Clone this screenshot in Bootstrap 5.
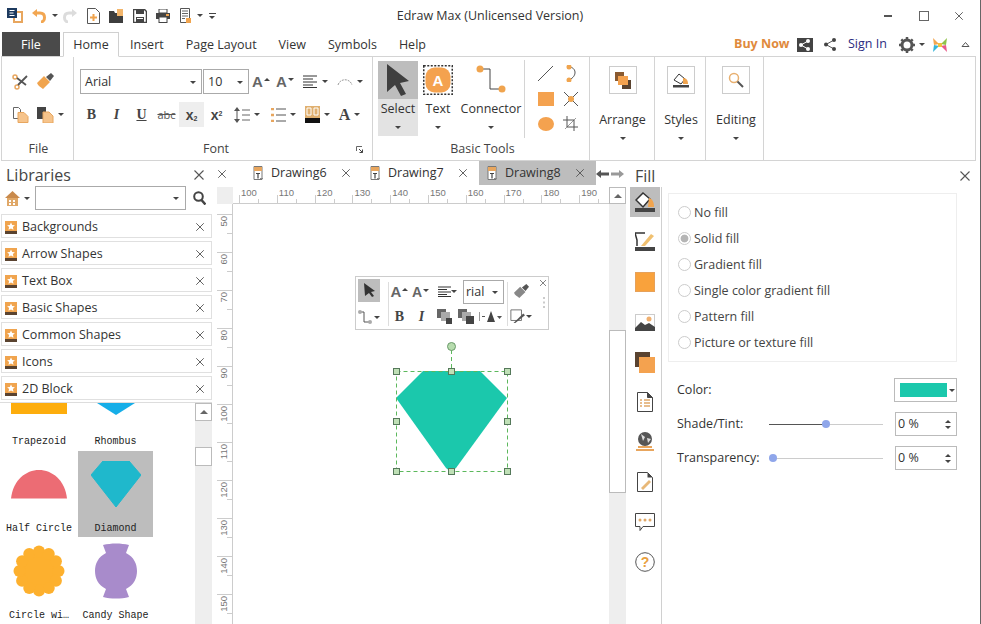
<!DOCTYPE html>
<html lang="en">
<head>
<meta charset="utf-8">
<title>Edraw Max</title>
<link href="https://cdn.jsdelivr.net/npm/bootstrap@5.3.0/dist/css/bootstrap.min.css" rel="stylesheet">
<style>
html,body{margin:0;height:100%;overflow:hidden;background:#fff}
body{font-family:"Open Sans","Noto Sans",sans-serif;font-size:12.5px;color:#333;line-height:1}
svg{display:block;flex:none}
.app{width:981px;height:624px;display:flex;flex-direction:column;overflow:hidden;border-right:1px solid #666}
.tri{display:inline-block;width:0;height:0;border-left:3px solid transparent;border-right:3px solid transparent;border-top:3px solid #444;flex:none}
.tri-up{display:inline-block;width:0;height:0;border-left:3px solid transparent;border-right:3px solid transparent;border-bottom:3px solid #444;flex:none}
.tbar{height:31px;display:grid;grid-template-columns:3px 23px 24px 10px 21px 24px 23px 23px 23px 23px 6px 18px 1fr 34px 38px 32px;padding-right:5px;align-items:center;justify-items:center;position:relative}
.ttl{position:absolute;left:0;right:0;top:10px;text-align:center;font-size:12.5px;color:#333}
.tabrow{height:25px;display:flex;align-items:flex-end;padding-left:2px}
.tabrow .nav-tabs{border:0;gap:0;flex-wrap:nowrap}
.tabrow .nav-link{border:0;border-radius:0;padding:2px 0 0;height:24px;display:flex;align-items:center;color:#333;font-size:12.5px;background:none}
.t-file{width:58px;background:#4a4a4a!important;color:#fff!important;justify-content:center}
.t-home{width:56px;margin-left:3px;justify-content:center;border:1px solid #d0d0d0!important;border-bottom:1px solid #fff!important;height:25px!important;margin-bottom:-1px;position:relative;z-index:2;background:#fff!important}
.t-i{margin-left:11px;margin-right:22px}
.t-p{margin-right:22px}.t-v{margin-right:22px}.t-s{margin-right:22px}
.tabright{margin-left:auto;display:flex;align-items:center;height:24px;padding-right:10px;padding-top:1px}
.buy{color:#e08a3c;font-weight:700;font-size:12.5px;width:63px}
.sign{color:#2b2b80;width:51px;margin-left:12px}
.shr{margin-left:11px}
.gl{margin-left:7px}
.chv{margin-left:13px}
.rib{margin-left:1px;width:975px;height:105px;border:1px solid #d4d4d4;display:flex;flex:none}
.grp{display:flex;flex-direction:column;border-right:1px solid #d4d4d4;height:103px;flex:none}
.g-body{height:82px;flex:none}
.g-lbl{height:21px;display:flex;align-items:center;justify-content:center;color:#444;position:relative;font-size:12.5px}
.lb-file{padding-left:2px}
.lb-font{padding-right:14px}
.lb-basic{padding-left:3px}
.launch{right:9px;top:7px}
.r2{display:flex;height:33px;align-items:center}
.pl6{padding-left:6px}.pl5{padding-left:5px}
.sl{display:flex;align-items:center;justify-content:center;height:25px;gap:4px;flex:none}
.w25{width:25px}.w24{width:24px}.w36{width:36px}.w33{width:33px}.w31{width:31px}.w34{width:34px}.w37{width:37px}
.on-lite{background:#eee}
.fnt{height:25px;border:1px solid #aaa;display:flex;align-items:center;justify-content:space-between;padding:1px 5px 0 4px;background:#fff;color:#333}
.fnt-a{width:122px}.fnt-b{width:46px;margin-left:1px}
.ab{font-family:"Liberation Sans",sans-serif;font-weight:700;font-size:15px;color:#666;display:flex;align-items:flex-start;gap:1px}
.ab-s{font-size:14px}
.ser{font-family:"Liberation Serif",serif;font-weight:700;font-size:14px;color:#444}
.ser-a{font-size:16px}
.sns{font-family:"Liberation Sans",sans-serif}
.sns sub,.sns sup{font-size:7px}
.abc{font-size:11px;color:#555}
.big{display:flex;flex-direction:column;align-items:center;height:75px;margin-top:4px;flex:none;font-size:12.5px}
.wb40{width:40px}.wb66{width:66px}
.big-top{height:38px;width:100%;display:flex;align-items:center;justify-content:center}
.big-l{height:19px;display:flex;align-items:center;padding-top:2px}
.big-c{height:18px;display:flex;align-items:center}
.sel-b{background:#e3e3e3}.sel-b .big-top{background:#bdbdbd}
.tools{display:grid;grid-template-columns:25px 25px;grid-auto-rows:25px;margin-top:4px;margin-left:8px;align-items:center;justify-items:center}
.sub-div{border-right:1px solid #d4d4d4;height:78px;margin-top:3px}
.mono{display:flex;flex-direction:column;align-items:center;height:103px}
.m-a{padding-left:1px}.m-b{padding-left:2px}.m-c{padding-left:3px}
.ibox{width:28px;height:28px;border:1px solid #ccc;margin-top:9px;display:flex;align-items:center;justify-content:center}
.mono-l{margin-top:17px;height:16px;display:flex;align-items:center;padding-top:2px}
.mono-c{margin-top:10px;display:flex}
.main{display:flex;flex:1;min-height:0}
.left{width:217px;flex:none;display:flex;flex-direction:column}
.lhead{height:25px;display:flex;align-items:center;justify-content:space-between;padding:3px 7px 0 6px;font-size:16px;color:#444;width:212px}
.lsearch{height:24px;display:flex;align-items:center;padding-left:5px;width:212px}
.lfield{width:151px;height:24px;border:1px solid #aaa;margin-left:5px;display:flex;align-items:center;justify-content:flex-end;padding-right:6px;flex:none}
.srch{margin-left:7px}
.llist{margin:4px 0 0 1px;width:211px;display:flex;flex-direction:column;gap:3px;flex:none;border-radius:0}
.llist .list-group-item{height:24px;padding:2px 6px 0 3px;border:1px solid #e0e0e0;border-radius:0;display:flex;align-items:center;gap:5px;margin:0;color:#333;font-size:12.5px}
.llist .list-group-item svg:last-child{margin-left:auto}
.sarea{margin-top:2px;border-top:1px solid #ddd;flex:1;display:flex;min-height:0;width:212px;overflow:hidden}
.sgrid{width:195px;display:grid;grid-template-columns:78px 75px;grid-template-rows:48px 86px 87px;flex:none;font-family:"Liberation Mono",monospace;font-size:10px;color:#222}
.tile{display:flex;flex-direction:column;align-items:center;justify-content:flex-end;overflow:hidden}
.tile-on{background:#bdbdbd}
.tshape{flex:1;width:100%;display:flex;align-items:center;justify-content:center;min-height:0}
.tile1 .tshape{align-items:flex-start}
.tlbl{height:20px;display:flex;align-items:center;white-space:nowrap;flex:none;padding-top:3px}
.tile1 .tlbl{padding-top:1px}
.vsb{width:17px;background:#eee;display:flex;flex-direction:column;flex:none}
.sbtn{height:18px;background:#fff;border:1px solid #bbb;display:flex;align-items:center;justify-content:center;flex:none}
.sbtn .tri-up{border-left-width:4px;border-right-width:4px;border-bottom:4px solid #666}
.sbtn-w{width:17px;height:17px}
.sthumb{background:#fff;border:1px solid #bbb;flex:none}
.th-a{margin-top:26px;height:19px}
.th-b{height:163px;margin-top:126px}
.center{width:410px;flex:none;display:flex;flex-direction:column}
.dtabs{height:26px;display:flex;align-items:center;flex:none}
.dt-x{margin-right:18px}
.dt{display:flex;align-items:center;height:24px;width:117px;padding-left:7px;gap:7px;color:#333;font-size:12.5px;margin-top:-2px;flex:none}
.dt-on{background:#bdbdbd}
.dt svg:last-child{margin-left:7px}
.rulerow{display:flex;height:17px;flex:none}
.corner{width:16px;background:#eee;flex:none}
.hr-u{width:376px;display:flex;overflow:hidden;padding-left:6px;border-bottom:1px solid #ccc;flex:none;font-size:9.5px;color:#777;font-family:"Liberation Sans",sans-serif}
.hr-n{width:37.8px;flex:none;border-left:1px solid #ccc;margin-top:8px;height:8px;position:relative}
.hr-n span{position:absolute;left:1px;top:-7px;white-space:nowrap}
.hr-n::after{content:"";position:absolute;left:18px;bottom:0;height:4px;border-left:1px solid #ccc}
.work{display:flex;flex:1;min-height:0}
.vrule{width:16px;flex:none;overflow:hidden;padding-top:10px;border-right:1px solid #ccc;font-size:9.5px;color:#777;font-family:"Liberation Sans",sans-serif}
.vr-n{height:38px;width:100%;border-top:1px solid #ccc;position:relative}
.vr-n span{position:absolute;left:2px;top:1px;writing-mode:vertical-rl;transform:rotate(180deg);white-space:nowrap}
.vr-n::after{content:"";position:absolute;right:0;top:18px;width:5px;border-top:1px solid #ccc}
.canvas{width:376px;flex:none;position:relative;overflow:hidden;background:#fff}
.vsb2{width:17px;flex:none;background:#eee;display:flex;flex-direction:column}
.flt{position:absolute;left:122px;top:72px;width:194px;height:54px;border:1px solid #ccc;background:#fff;display:flex;padding:2px 0 0 1px}
.f-col{display:flex;flex-direction:column;flex:none}
.f-a{width:24px;align-items:center}
.f-main{width:118px}
.f-r{width:26px;align-items:center}
.f-row{display:flex;height:25px;align-items:center;flex:none}
.f-row>*{flex:none}
.f-sep{width:1px;background:#ddd;height:44px;margin:3px 0 0 7px;flex:none}
.f-sep2{margin:3px 0 0 0}
.f-21{width:21px;display:flex;justify-content:center}
.f-23{width:23px;display:flex;justify-content:center}
.f-22{width:22px;display:flex;justify-content:center}
.f-27{width:27px;display:flex;justify-content:center}
.f-32{width:32px;display:flex;justify-content:center;align-items:center}
.f-cell{height:25px;display:flex;align-items:center;justify-content:center;gap:1px}
.fsel{background:#bdbdbd;width:22px;height:24px;display:flex;align-items:center;justify-content:center}
.frial{width:41px;height:24px;border:1px solid #aaa;display:flex;align-items:center;justify-content:space-between;padding:1px 5px 0 2px}
.f-x{position:absolute;right:1px;top:2px}
.f-dots{position:absolute;right:3px;top:20px}
.selsvg{position:absolute;left:157px;top:136px}
.right{flex:1;display:flex;flex-direction:column;min-width:0}
.rhead{height:26px;display:flex;align-items:center;justify-content:space-between;padding:3px 9px 0 8px;font-size:16px;color:#444;flex:none}
.rbody{display:flex;flex:1;min-height:0}
.side{width:35px;border-right:1px solid #d0d0d0;flex:none;display:flex;flex-direction:column;align-items:flex-end;padding-right:1px}
.sitem{width:30px;height:30px;margin-bottom:10px;display:flex;align-items:center;justify-content:center;flex:none}
.sitem.on{background:#bdbdbd}
.form-p{flex:1;padding-top:6px;padding-left:6px}
.gbox{width:289px;height:169px;border:1px solid #eee;padding:5px 0 0 9px}
.gbox .form-check{height:26px;min-height:0;margin:0;padding:0;display:flex;align-items:center;gap:3px;color:#444}
.gbox .form-check-input{float:none;margin:0;width:13px;height:13px;border:1px solid #ccc;flex:none;opacity:1}
.gbox .form-check-input:checked{background-color:#fff;border-color:#ccc;background-image:radial-gradient(circle,#b5b5b5 0,#b5b5b5 45%,#fff 55%)}
.gbox .form-check-label{opacity:1!important;color:#444;padding-top:2px}
.prow{display:flex;align-items:center;height:24px;margin-left:9px;width:280px;margin-bottom:10px;color:#333}
.plbl{width:92px;flex:none}
.track{width:114px;height:1px;background:#ccc;position:relative;flex:none;margin-right:12px}
.fillbar{position:absolute;left:0;top:0;height:1px;background:#555}
.thumb{position:absolute;width:8px;height:8px;border-radius:50%;background:#8fa6ea;top:-4px}
.pbox{width:62px;height:24px;border:1px solid #bbb;display:flex;align-items:center;justify-content:space-between;padding:0 5px 0 2px;flex:none}
.spin{display:flex;flex-direction:column;gap:3px}
.cbox{width:63px;height:24px;border:1px solid #bbb;margin-left:auto;display:flex;align-items:center;padding-left:5px;gap:2px}
.cswatch{width:47px;height:14px;background:#1bc8ac}
.menu-m{gap:2px}
</style>
</head>
<body>
<svg width="0" height="0" class="position-absolute">
<defs>
<symbol id="xx" viewBox="0 0 12 12"><path d="M1.500 1.500l9 9M10.500 1.500l-9 9" stroke="#555" stroke-width="1.100" fill="none"/></symbol>
<symbol id="star" viewBox="0 0 12 13"><rect width="12" height="10" fill="#f0a44e"/><rect y="10" width="12" height="3" fill="#5a4330"/><path d="M6 1.500l1.200 2.500 2.700.3-2 1.800.6 2.700L6 7.400 3.500 8.800l.6-2.700-2-1.800 2.700-.3z" fill="#fff"/></symbol>
<symbol id="dc" viewBox="0 0 12 15"><path d="M2 .5h8v13H2z" fill="#fff" stroke="#777"/><rect x="2" y="1" width="8" height="4" fill="#e8a65e"/><path d="M4 7.500h4M6 7.500v5" stroke="#444" stroke-width="1.200"/><path d="M8 12.500h3" stroke="#888"/></symbol>
</defs>
</svg>
<div class="app">
  <div class="tbar">
    <span></span>
    <svg width="16" height="15" viewBox="0 0 16 15"><rect x="7" y="4" width="8" height="10" fill="none" stroke="#e8a65e" stroke-width="2"/><rect width="10" height="10" fill="#1d3a5f"/><path d="M2.500 2.500h5M2.500 5h4M2.500 7.500h5" stroke="#fff" stroke-width="1.200"/></svg>
    <svg width="15" height="14" viewBox="0 0 15 14"><path d="M5 4h4c3 0 4.500 2 4.500 4.500S12 13 10 13" stroke="#f2a651" stroke-width="3" fill="none"/><path d="M6 0v8L1 4z" fill="#f2a651"/></svg>
    <span class="tri"></span>
    <svg width="15" height="14" viewBox="0 0 15 14"><path d="M10 4H6C3 4 1.500 6 1.500 8.500S3 13 5 13" stroke="#dcdcdc" stroke-width="3" fill="none"/><path d="M9 0v8l5-4z" fill="#dcdcdc"/></svg>
    <svg width="13" height="16" viewBox="0 0 13 16"><path d="M.5.5h8l4 4v11H.5z" fill="#fff" stroke="#555"/><path d="M6.500 6v7M3 9.500h7" stroke="#f0a44e" stroke-width="2"/></svg>
    <svg width="15" height="14" viewBox="0 0 15 14"><path d="M0 2h5l1 2h8v10H0z" fill="#3d3d3d"/><rect x="8" y="0" width="6" height="7" fill="#f2b56b"/></svg>
    <svg width="14" height="14" viewBox="0 0 14 14"><path d="M.5.5h11l2 2v11H.5z" fill="#fff" stroke="#444" stroke-width="1.500"/><rect x="3" y="1" width="8" height="4" fill="#444"/><rect x="3" y="8" width="8" height="5" fill="#444"/><rect x="4" y="9" width="6" height="1" fill="#fff"/></svg>
    <svg width="14" height="14" viewBox="0 0 14 14"><rect x="3" width="8" height="4" fill="#fff" stroke="#444"/><rect y="4" width="14" height="6" fill="#444"/><rect x="3" y="8" width="8" height="5.500" fill="#fff" stroke="#444"/><rect x="10" y="5" width="3" height="2" fill="#f0a44e"/></svg>
    <svg width="12" height="16" viewBox="0 0 12 16"><path d="M.5.5h9v14H.5z" fill="#fff" stroke="#555"/><path d="M2 3h6M2 5.500h6M2 8h6M2 10.500h3" stroke="#666"/><rect x="6" y="10" width="5" height="5" fill="#f0a44e"/></svg>
    <span class="tri"></span>
    <span class="d-flex flex-column align-items-center menu-m"><svg width="7" height="1"><rect width="7" height="1" fill="#444"/></svg><span class="tri"></span></span>
    <span></span>
    <svg width="8" height="2"><rect width="8" height="2" fill="#555"/></svg>
    <svg width="10" height="10" viewBox="0 0 10 10"><rect x=".5" y=".5" width="9" height="9" fill="none" stroke="#666"/></svg>
    <svg width="10" height="10"><use href="#xx"/></svg>
    <div class="ttl">Edraw Max (Unlicensed Version)</div>
  </div>
  <div class="tabrow">
    <ul class="nav nav-tabs">
      <li class="nav-item"><a class="nav-link t-file" href="#">File</a></li>
      <li class="nav-item"><a class="nav-link t-home" href="#">Home</a></li>
      <li class="nav-item"><a class="nav-link t-i" href="#">Insert</a></li>
      <li class="nav-item"><a class="nav-link t-p" href="#">Page Layout</a></li>
      <li class="nav-item"><a class="nav-link t-v" href="#">View</a></li>
      <li class="nav-item"><a class="nav-link t-s" href="#">Symbols</a></li>
      <li class="nav-item"><a class="nav-link" href="#">Help</a></li>
    </ul>
    <div class="tabright">
      <span class="buy">Buy Now</span>
      <svg width="16" height="14" viewBox="0 0 16 14"><rect width="16" height="14" fill="#444"/><path d="M4 7l7-4M4 7l7 4" stroke="#fff"/><circle cx="4" cy="7" r="2" fill="#fff"/><circle cx="11" cy="3" r="2" fill="#fff"/><circle cx="11" cy="11" r="2" fill="#fff"/></svg>
      <svg class="shr" width="12" height="13" viewBox="0 0 12 13"><path d="M10 2L2 6.500l8 4.500" stroke="#555" fill="none"/><circle cx="10" cy="2" r="2" fill="#444"/><circle cx="2" cy="6.500" r="2" fill="#444"/><circle cx="10" cy="11" r="2" fill="#444"/></svg>
      <span class="sign">Sign In</span>
      <svg width="16" height="16" viewBox="0 0 16 16"><circle cx="8" cy="8" r="5" fill="none" stroke="#555" stroke-width="3"/><path d="M8 0v3M8 13v3M0 8h3M13 8h3M2.300 2.300l2 2M11.700 11.700l2 2M13.700 2.300l-2 2M4.300 11.700l-2 2" stroke="#555" stroke-width="2.500"/></svg>
      <span class="tri ms-1"></span>
      <svg class="gl" width="16" height="16" viewBox="0 0 16 16"><path d="M1 1l6 6-5 1z" fill="#f2a651"/><path d="M15 1L9 7l5 1z" fill="#8fc34a"/><path d="M1 15l6-6-5-1z" fill="#36b5d8"/><path d="M15 15L9 9l5-1z" fill="#e85a8a"/><rect x="6" y="6" width="4" height="4" fill="#f0c040"/></svg>
      <svg class="chv" width="9" height="7" viewBox="0 0 9 7"><path d="M1 5.500l3.500-4 3.500 4z" fill="none" stroke="#555"/></svg>
    </div>
  </div>
  <div class="rib">
    <div class="grp" style="width:72px">
      <div class="g-body pt-2">
        <div class="r2 pl6">
          <div class="sl w25"><svg width="17" height="16" viewBox="0 0 17 16"><circle cx="3" cy="3" r="2" fill="none" stroke="#e8a65e" stroke-width="1.500"/><circle cx="5" cy="13" r="2" fill="none" stroke="#e8a65e" stroke-width="1.500"/><path d="M5 4l9 7M6 11l9-9" stroke="#555" stroke-width="1.800"/></svg></div>
          <div class="sl w25"><svg width="17" height="17" viewBox="0 0 17 17"><path d="M0 10l7-7 6 6-7 7c-2-2-5-3-6-6z" fill="#f0a44e"/><path d="M9 4l5-4 3 3-4 5z" fill="#555"/></svg></div>
        </div>
        <div class="r2 pl6">
          <div class="sl w25"><svg width="16" height="16" viewBox="0 0 16 16"><path d="M.5.5h5l2 2v9h-7z" fill="#fff" stroke="#666"/><path d="M5 5.500h6l4 4v6H5z" fill="#f6c48c" stroke="#e8a65e"/></svg></div>
          <div class="sl w34"><svg width="17" height="16" viewBox="0 0 17 16"><rect width="9" height="12" fill="#444"/><path d="M6 5h6l4 4v7H6z" fill="#f6c48c" stroke="#e8a65e"/></svg><span class="tri"></span></div>
        </div>
      </div>
      <div class="g-lbl lb-file">File</div>
    </div>
    <div class="grp" style="width:299px">
      <div class="g-body pt-2">
        <div class="r2 pl6">
          <div class="fnt fnt-a"><span>Arial</span><span class="tri"></span></div>
          <div class="fnt fnt-b"><span>10</span><span class="tri"></span></div>
          <div class="sl w24"><span class="ab">A<span class="tri-up mt-1"></span></span></div>
          <div class="sl w24"><span class="ab">A<span class="tri mt-1"></span></span></div>
          <div class="sl w37"><svg width="15" height="13" viewBox="0 0 15 13"><path d="M0 1h14M0 4h10M0 7h14M0 10h10M0 12.500h14" stroke="#333"/></svg><span class="tri"></span></div>
          <div class="sl w31"><svg width="16" height="9" viewBox="0 0 16 9"><path d="M1 8C3 1 13 1 15 8" fill="none" stroke="#999" stroke-dasharray="2 1"/></svg><span class="tri"></span></div>
        </div>
        <div class="r2 pl5">
          <div class="sl w25"><span class="ser">B</span></div>
          <div class="sl w25"><span class="ser fst-italic">I</span></div>
          <div class="sl w25"><span class="ser text-decoration-underline">U</span></div>
          <div class="sl w25"><span class="abc text-decoration-line-through">abc</span></div>
          <div class="sl w25 on-lite"><span class="ser sns">x<sub>2</sub></span></div>
          <div class="sl w25"><span class="ser sns">x<sup>2</sup></span></div>
          <div class="sl w36"><svg width="16" height="16" viewBox="0 0 16 16"><path d="M3 0l3 4H0zM3 16l3-4H0z" fill="#555"/><path d="M3 4v8" stroke="#555"/><path d="M8 3h8M8 8h8M8 13h8" stroke="#666"/></svg><span class="tri"></span></div>
          <div class="sl w36"><svg width="15" height="14" viewBox="0 0 15 14"><path d="M0 1h3M0 7h3M0 13h3" stroke="#e8a65e" stroke-width="2.500"/><path d="M5 1h10M5 7h10M5 13h10" stroke="#555"/></svg><span class="tri"></span></div>
          <div class="sl w33"><svg width="15" height="17" viewBox="0 0 15 17"><rect width="15" height="12" fill="#e0b070"/><path d="M2 2h4v7H2zM9 2h4v7H9z" fill="none" stroke="#fff"/><rect y="12" width="15" height="5" fill="#111"/></svg><span class="tri"></span></div>
          <div class="sl w31"><span class="ser ser-a">A</span><span class="tri"></span></div>
        </div>
      </div>
      <div class="g-lbl lb-font">Font<svg class="position-absolute launch" width="7" height="7" viewBox="0 0 7 7"><path d="M.5 5V.5H6" fill="none" stroke="#666"/><path d="M3 3l3.500 3.500M6.500 3.500v3h-3" fill="none" stroke="#444"/></svg></div>
    </div>
    <div class="grp" style="width:217px">
      <div class="g-body d-flex pl5">
        <div class="big sel-b wb40">
          <div class="big-top"><svg width="24" height="32" viewBox="0 0 24 32"><path d="M1 0l22 17-9 2 6 11-5 2-6-11-8 7z" fill="#3f3f3f"/></svg></div>
          <div class="big-l">Select</div><div class="big-c"><span class="tri"></span></div>
        </div>
        <div class="big wb40">
          <div class="big-top"><svg width="30" height="30" viewBox="0 0 30 30"><rect x=".75" y=".75" width="28.500" height="28.500" fill="none" stroke="#333" stroke-width="1.500" stroke-dasharray="2 1.500"/><rect x="2.500" y="2.500" width="25" height="25" rx="9" fill="#f4a24f"/><text x="15" y="21" text-anchor="middle" font-family="Liberation Sans" font-weight="700" font-size="15" fill="#fff">A</text></svg></div>
          <div class="big-l">Text</div><div class="big-c"><span class="tri"></span></div>
        </div>
        <div class="big wb66">
          <div class="big-top"><svg width="32" height="30" viewBox="0 0 32 30"><path d="M5 4h10v20h12" fill="none" stroke="#444"/><circle cx="5" cy="4" r="3.500" fill="#f0a44e"/><circle cx="27" cy="24" r="3.500" fill="#f0a44e"/></svg></div>
          <div class="big-l">Connector</div><div class="big-c"><span class="tri"></span></div>
        </div>
        <div class="sub-div"></div>
        <div class="tools">
          <svg width="17" height="17" viewBox="0 0 17 17"><path d="M1 16L16 1" stroke="#555"/></svg>
          <svg width="12" height="17" viewBox="0 0 12 17"><path d="M4 2c7 0 9 9 0 13" fill="none" stroke="#555"/><circle cx="4" cy="2" r="2.500" fill="#f0a44e"/><circle cx="4" cy="15" r="2.500" fill="#f0a44e"/></svg>
          <svg width="16" height="14" viewBox="0 0 16 14"><rect width="16" height="14" fill="#f4a24f"/></svg>
          <svg width="16" height="16" viewBox="0 0 16 16"><path d="M1 1l14 14M15 1L1 15" stroke="#555"/><circle cx="8" cy="8" r="3" fill="#f0a44e"/></svg>
          <svg width="16" height="14" viewBox="0 0 16 14"><ellipse cx="8" cy="7" rx="8" ry="7" fill="#f4a24f"/></svg>
          <svg width="15" height="15" viewBox="0 0 15 15"><path d="M0 4h11v11M4 0v11h11" fill="none" stroke="#555"/><path d="M2 13L13 2" stroke="#555" stroke-width=".6"/></svg>
        </div>
      </div>
      <div class="g-lbl lb-basic">Basic Tools</div>
    </div>
    <div class="grp" style="width:65px">
      <div class="mono m-a">
        <div class="ibox"><svg width="16" height="17" viewBox="0 0 16 17"><rect width="9" height="9" fill="#8a5a30"/><rect x="7" y="8" width="9" height="9" fill="#5a4330"/><rect x="3" y="4" width="10" height="9" fill="#f4a24f"/></svg></div>
        <div class="mono-l">Arrange</div><div class="mono-c"><span class="tri"></span></div>
      </div>
    </div>
    <div class="grp" style="width:51px">
      <div class="mono m-b">
        <div class="ibox"><svg width="16" height="15" viewBox="0 0 16 15"><path d="M1 7l5-6 6 5-4 5z" fill="#fff" stroke="#333"/><path d="M10 5c4 0 5 3 5 6h-5z" fill="#f0a44e"/><rect y="12" width="16" height="2.500" fill="#444"/></svg></div>
        <div class="mono-l">Styles</div><div class="mono-c"><span class="tri"></span></div>
      </div>
    </div>
    <div class="grp" style="width:58px">
      <div class="mono m-c">
        <div class="ibox"><svg width="16" height="16" viewBox="0 0 16 16"><circle cx="6" cy="6" r="4.500" fill="#fff" stroke="#e8b070" stroke-width="1.500"/><path d="M9.500 9.500L15 15" stroke="#555" stroke-width="2"/></svg></div>
        <div class="mono-l">Editing</div><div class="mono-c"><span class="tri"></span></div>
      </div>
    </div>
  </div>
  <div class="main">
    <div class="left">
      <div class="lhead"><span>Libraries</span><svg width="12" height="12"><use href="#xx"/></svg></div>
      <div class="lsearch">
        <svg width="15" height="15" viewBox="0 0 15 15"><path d="M0 7l7.500-7L15 7z" fill="#c98a4c"/><rect x="2" y="7" width="11" height="8" fill="#e0a868"/><path d="M4 9h2v2H4zM8 9h2v2H8zM4 12h2v2H4zM8 12h2v2H8z" fill="#fff"/></svg>
        <span class="tri ms-1"></span>
        <div class="lfield"><span class="tri"></span></div>
        <svg class="srch" width="13" height="14" viewBox="0 0 13 14"><circle cx="5.500" cy="5.500" r="4.300" fill="none" stroke="#444" stroke-width="2"/><path d="M8.500 9l4 4.500" stroke="#444" stroke-width="2.500"/></svg>
      </div>
      <ul class="list-group llist">
        <li class="list-group-item"><svg width="12" height="13"><use href="#star"/></svg>Backgrounds<svg width="10" height="10"><use href="#xx"/></svg></li>
        <li class="list-group-item"><svg width="12" height="13"><use href="#star"/></svg>Arrow Shapes<svg width="10" height="10"><use href="#xx"/></svg></li>
        <li class="list-group-item"><svg width="12" height="13"><use href="#star"/></svg>Text Box<svg width="10" height="10"><use href="#xx"/></svg></li>
        <li class="list-group-item"><svg width="12" height="13"><use href="#star"/></svg>Basic Shapes<svg width="10" height="10"><use href="#xx"/></svg></li>
        <li class="list-group-item"><svg width="12" height="13"><use href="#star"/></svg>Common Shapes<svg width="10" height="10"><use href="#xx"/></svg></li>
        <li class="list-group-item"><svg width="12" height="13"><use href="#star"/></svg>Icons<svg width="10" height="10"><use href="#xx"/></svg></li>
        <li class="list-group-item"><svg width="12" height="13"><use href="#star"/></svg>2D Block<svg width="10" height="10"><use href="#xx"/></svg></li>
      </ul>
      <div class="sarea">
        <div class="sgrid">
          <div class="tile tile1"><div class="tshape"><svg width="56" height="11"><rect width="56" height="11" fill="#fdad0d"/></svg></div><div class="tlbl">Trapezoid</div></div>
          <div class="tile tile1"><div class="tshape"><svg width="38" height="12" viewBox="0 0 38 12"><path d="M0 0h38L19 12z" fill="#16aee8"/></svg></div><div class="tlbl">Rhombus</div></div>
          <div class="tile"><div class="tshape"><svg width="56" height="29" viewBox="0 0 56 29"><path d="M0 28.500C2 10 15 0 28 0s26 10 28 28.500z" fill="#ec6c74"/></svg></div><div class="tlbl">Half Circle</div></div>
          <div class="tile tile-on"><div class="tshape"><svg width="50" height="46" viewBox="0 0 50 46"><path d="M12 0h26l12 14-25 32L0 14z" fill="#1fb8cc" stroke="#1fb8cc" stroke-linejoin="round"/></svg></div><div class="tlbl">Diamond</div></div>
          <div class="tile"><div class="tshape"><svg width="52" height="52" viewBox="0 0 52 52"><g fill="#fdb02e"><circle cx="26" cy="26" r="21"/><circle cx="45.500" cy="26" r="6"/><circle cx="42.900" cy="35.750" r="6"/><circle cx="35.750" cy="42.900" r="6"/><circle cx="26" cy="45.500" r="6"/><circle cx="16.250" cy="42.900" r="6"/><circle cx="9.100" cy="35.750" r="6"/><circle cx="6.500" cy="26" r="6"/><circle cx="9.100" cy="16.250" r="6"/><circle cx="16.250" cy="9.100" r="6"/><circle cx="26" cy="6.500" r="6"/><circle cx="35.750" cy="9.100" r="6"/><circle cx="42.900" cy="16.250" r="6"/></g></svg></div><div class="tlbl">Circle wi…</div></div>
          <div class="tile"><div class="tshape"><svg width="42" height="56" viewBox="0 0 42 56"><path d="M8 2C16 0 26 0 34 2l-3 8c8 4 11 11 11 18s-3 14-11 18l3 8C26 56 16 56 8 54l3-8C3 42 0 35 0 28s3-14 11-18z" fill="#a88bcb"/></svg></div><div class="tlbl">Candy Shape</div></div>
        </div>
        <div class="vsb"><div class="sbtn"><span class="tri-up"></span></div><div class="sthumb th-a"></div></div>
      </div>
    </div>
    <div class="center">
      <div class="dtabs">
        <svg class="dt-x" width="10" height="10"><use href="#xx"/></svg>
        <div class="dt"><svg width="12" height="15"><use href="#dc"/></svg>Drawing6<svg width="10" height="10"><use href="#xx"/></svg></div>
        <div class="dt"><svg width="12" height="15"><use href="#dc"/></svg>Drawing7<svg width="10" height="10"><use href="#xx"/></svg></div>
        <div class="dt dt-on"><svg width="12" height="15"><use href="#dc"/></svg>Drawing8<svg width="10" height="10"><use href="#xx"/></svg></div>
        <svg width="28" height="10" viewBox="0 0 28 10"><path d="M0 5l5-4v2.500h8v3H5V9z" fill="#555"/><path d="M28 5l-5-4v2.500h-8v3h8V9z" fill="#999"/></svg>
      </div>
      <div class="rulerow">
        <div class="corner"></div>
        <div class="hr-u">
          <div class="hr-n"><span>100</span></div><div class="hr-n"><span>110</span></div><div class="hr-n"><span>120</span></div><div class="hr-n"><span>130</span></div><div class="hr-n"><span>140</span></div><div class="hr-n"><span>150</span></div><div class="hr-n"><span>160</span></div><div class="hr-n"><span>170</span></div><div class="hr-n"><span>180</span></div><div class="hr-n"><span>190</span></div>
        </div>
        <div class="sbtn sbtn-w"><span class="tri-up"></span></div>
      </div>
      <div class="work">
        <div class="vrule">
          <div class="vr-n"><span>50</span></div><div class="vr-n"><span>60</span></div><div class="vr-n"><span>70</span></div><div class="vr-n"><span>80</span></div><div class="vr-n"><span>90</span></div><div class="vr-n"><span>100</span></div><div class="vr-n"><span>110</span></div><div class="vr-n"><span>120</span></div><div class="vr-n"><span>130</span></div><div class="vr-n"><span>140</span></div><div class="vr-n"><span>150</span></div>
        </div>
        <div class="canvas">
          <div class="flt">
            <div class="f-col f-a">
              <div class="fsel"><svg width="11" height="14" viewBox="0 0 11 14"><path d="M0 0l11 8-4 1 3 4-2 1-3-4-4 3z" fill="#333"/></svg></div>
              <div class="f-cell mt-1"><svg width="15" height="14" viewBox="0 0 15 14"><path d="M2 2h4v10h6" fill="none" stroke="#555"/><circle cx="2" cy="2" r="2" fill="#aaa"/><circle cx="12" cy="12" r="2" fill="#aaa"/></svg><span class="tri"></span></div>
            </div>
            <div class="f-sep"></div>
            <div class="f-col f-main">
              <div class="f-row">
                <span class="f-21"><span class="ab">A<span class="tri-up mt-1"></span></span></span>
                <span class="f-21"><span class="ab ab-s">A<span class="tri mt-1"></span></span></span>
                <span class="f-32"><svg width="13" height="11" viewBox="0 0 13 11"><path d="M0 1h13M0 3.500h9M0 6h13M0 8.500h9M0 10.500h13" stroke="#333"/></svg><span class="tri"></span></span>
                <div class="frial"><span>rial</span><span class="tri"></span></div>
              </div>
              <div class="f-row">
                <span class="f-21"><span class="ser">B</span></span>
                <span class="f-23"><span class="ser fst-italic">I</span></span>
                <span class="f-22"><svg width="15" height="15" viewBox="0 0 15 15"><rect width="9" height="9" fill="#666"/><rect x="4" y="3" width="9" height="9" fill="#aaa"/><rect x="9" y="9" width="6" height="6" fill="#444"/></svg></span>
                <span class="f-22"><svg width="16" height="15" viewBox="0 0 16 15"><rect width="9" height="9" fill="#666"/><rect x="4" y="3" width="9" height="9" fill="#aaa"/><rect x="8" y="7" width="8" height="8" fill="#444"/></svg></span>
                <span class="f-27"><svg width="24" height="11" viewBox="0 0 24 11"><path d="M0 1v9" stroke="#999" stroke-width="2"/><path d="M3 5.500h3" stroke="#555"/><path d="M12 0l4 11H8z" fill="#444"/><path d="M18 5h5l-2.500 3z" fill="#555"/></svg></span>
              </div>
            </div>
            <div class="f-sep f-sep2"></div>
            <div class="f-col f-r">
              <div class="f-cell"><svg width="15" height="15" viewBox="0 0 17 17"><path d="M0 10l7-7 6 6-7 7c-2-2-5-3-6-6z" fill="#888"/><path d="M9 4l5-4 3 3-4 5z" fill="#555"/></svg></div>
              <div class="f-cell"><svg width="15" height="15" viewBox="0 0 17 17"><path d="M1 1h12v12H1z" fill="none" stroke="#666"/><path d="M4 16L15 5l2 2L6 16z" fill="#555"/></svg><span class="tri"></span></div>
            </div>
            <svg class="f-x" width="8" height="8"><use href="#xx"/></svg>
            <svg class="f-dots" width="2" height="11"><path d="M1 0v2M1 4.500v2M1 9v2" stroke="#bbb" stroke-width="1.500"/></svg>
          </div>
          <svg class="selsvg" width="123" height="137" viewBox="390 340 123 137">
            <path d="M423 371H480L507 398 456 468Q451 473 446 468L396 398z" fill="#1bc8ac"/>
            <path d="M451.500 350V371M396.500 371.500H507.500V471.500H396.500z" fill="none" stroke="#5cb85c" stroke-dasharray="4 3"/>
            <circle cx="451.500" cy="346.500" r="4" fill="#b7dcae" stroke="#6a9a6a"/>
            <g fill="#bfe0b6" stroke="#55785a">
              <rect x="393.500" y="368.500" width="6" height="6"/><rect x="448.500" y="368.500" width="6" height="6"/><rect x="504.500" y="368.500" width="6" height="6"/>
              <rect x="393.500" y="418.500" width="6" height="6"/><rect x="504.500" y="418.500" width="6" height="6"/>
              <rect x="393.500" y="468.500" width="6" height="6"/><rect x="448.500" y="468.500" width="6" height="6"/><rect x="504.500" y="468.500" width="6" height="6"/>
            </g>
          </svg>
        </div>
        <div class="vsb2"><div class="sthumb th-b"></div></div>
      </div>
    </div>
    <div class="right">
      <div class="rhead"><span>Fill</span><svg width="12" height="12"><use href="#xx"/></svg></div>
      <div class="rbody">
        <div class="side">
          <div class="sitem on"><svg width="20" height="22" viewBox="0 0 20 22"><path d="M1 9l7-7 7 6-7 8z" fill="#fff" stroke="#333" stroke-width="1.500"/><path d="M14 7c4 1 5 5 5 9h-6z" fill="#f0a44e"/><rect y="17" width="20" height="4" fill="#444"/></svg></div>
          <div class="sitem"><svg width="20" height="20" viewBox="0 0 20 20"><path d="M2 14V8l-2-7h10" fill="none" stroke="#333" stroke-width="1.500"/><path d="M6 14L16 2l3 2-9 10z" fill="#f0c070"/><rect y="15" width="20" height="4" fill="#444"/></svg></div>
          <div class="sitem"><svg width="20" height="20"><rect x=".5" y=".5" width="19" height="19" fill="#f9a23c" stroke="#e6a15a"/></svg></div>
          <div class="sitem"><svg width="20" height="17" viewBox="0 0 20 17"><rect x=".5" y=".5" width="19" height="16" fill="#fff" stroke="#ccc"/><circle cx="14" cy="5" r="2.500" fill="#f0b070"/><path d="M0 14l6-6 4 3 4-2 6 4v4H0z" fill="#444"/></svg></div>
          <div class="sitem"><svg width="20" height="21" viewBox="0 0 20 21"><rect width="15" height="15" fill="#5a4330"/><rect x="4" y="5" width="16" height="16" fill="#f4a24f"/></svg></div>
          <div class="sitem"><svg width="16" height="20" viewBox="0 0 16 20"><path d="M.5.5h10l5 5v14H.5z" fill="#fff" stroke="#444"/><path d="M10.500.5v5h5" fill="#444" stroke="#444"/><path d="M3 8h2M3 11h2M3 14h2M7 8h6M7 11h6M7 14h6" stroke="#e0a868" stroke-width="1.500"/></svg></div>
          <div class="sitem"><svg width="20" height="20" viewBox="0 0 20 20"><circle cx="10" cy="7" r="7" fill="#555"/><path d="M6 2l4 3-2 4zM12 6l4 1-3 4z" fill="#ddd"/><path d="M3 15h14M1 18h18" stroke="#e8a65e" stroke-width="2"/></svg></div>
          <div class="sitem"><svg width="16" height="20" viewBox="0 0 16 20"><path d="M.5.5h10l5 5v14H.5z" fill="#fff" stroke="#444"/><path d="M10.500.5v5h5z" fill="#444"/><path d="M4 16l8-8 2 2-8 8z" fill="#e8b878"/></svg></div>
          <div class="sitem"><svg width="20" height="19" viewBox="0 0 20 19"><path d="M.5.5h19v13H8l-3 4v-4H.5z" fill="#fff" stroke="#444"/><circle cx="5" cy="7" r="1.500" fill="#e0a868"/><circle cx="10" cy="7" r="1.500" fill="#e0a868"/><circle cx="15" cy="7" r="1.500" fill="#e0a868"/></svg></div>
          <div class="sitem"><svg width="20" height="20" viewBox="0 0 20 20"><circle cx="10" cy="10" r="9.300" fill="#fff" stroke="#555"/><text x="10" y="15" text-anchor="middle" font-family="Liberation Sans" font-weight="700" font-size="14" fill="#e8a040">?</text></svg></div>
        </div>
        <div class="form-p">
          <div class="gbox">
            <div class="form-check"><input class="form-check-input" type="radio" name="f" id="r1"><label class="form-check-label" for="r1">No fill</label></div>
            <div class="form-check"><input class="form-check-input" type="radio" name="f" id="r2" checked><label class="form-check-label" for="r2">Solid fill</label></div>
            <div class="form-check"><input class="form-check-input" type="radio" name="f" id="r3"><label class="form-check-label" for="r3">Gradient fill</label></div>
            <div class="form-check"><input class="form-check-input" type="radio" name="f" id="r4"><label class="form-check-label" for="r4">Single color gradient fill</label></div>
            <div class="form-check"><input class="form-check-input" type="radio" name="f" id="r5"><label class="form-check-label" for="r5">Pattern fill</label></div>
            <div class="form-check"><input class="form-check-input" type="radio" name="f" id="r6"><label class="form-check-label" for="r6">Picture or texture fill</label></div>
          </div>
          <div class="prow mt-3"><span class="plbl">Color:</span><div class="cbox"><span class="cswatch"></span><span class="tri"></span></div></div>
          <div class="prow"><span class="plbl">Shade/Tint:</span><div class="track"><div class="fillbar" style="width:57px"></div><span class="thumb" style="left:53px"></span></div><div class="pbox"><span>0 %</span><span class="spin"><span class="tri-up d-block"></span><span class="tri d-block"></span></span></div></div>
          <div class="prow"><span class="plbl">Transparency:</span><div class="track"><span class="thumb" style="left:0"></span></div><div class="pbox"><span>0 %</span><span class="spin"><span class="tri-up d-block"></span><span class="tri d-block"></span></span></div></div>
        </div>
      </div>
    </div>
  </div>
</div>
</body>
</html>
